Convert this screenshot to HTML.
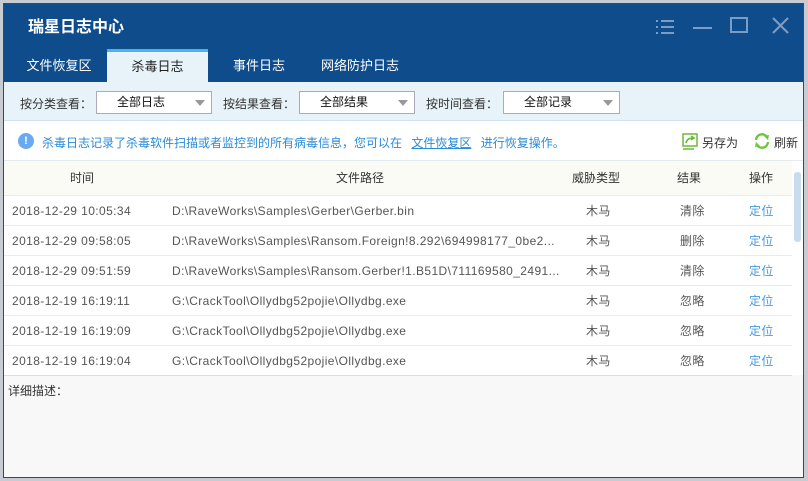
<!DOCTYPE html>
<html><head><meta charset="utf-8"><style>
*{margin:0;padding:0;box-sizing:border-box}
body{width:808px;height:481px;background:#c8ccd2;font-family:"Liberation Sans","Noto Sans CJK SC",sans-serif;font-size:12px;position:relative;overflow:hidden}
.win{position:absolute;left:3px;top:3px;width:801px;height:475px;background:#f8f8f8;border:1px solid #1a4f8c}
.title{position:absolute;left:0;top:0;width:799px;height:78px;background:#0f4c8c}
.title h1{position:absolute;left:24px;top:9px;color:#fff;font-size:16px;font-weight:bold}
.tab{position:absolute;top:45px;height:33px;line-height:33px;color:#fff;font-size:13px;text-align:center}
.tab.act{background:#e8f3f9;color:#222;border-top:3px solid #4db2ea;line-height:30px}
.filter{position:absolute;left:0;top:78px;width:799px;height:39px;background:#e8f3f9;border-bottom:1px solid #cde3f0}
.lbl{position:absolute;top:13px;color:#333}
.sel{position:absolute;top:9px;height:23px;border:1px solid #aab;background:#fff;line-height:21px;color:#111}
.sel span{position:absolute;left:20px}
.sel i{position:absolute;right:6px;top:8px;border-left:5px solid transparent;border-right:5px solid transparent;border-top:6px solid #999}
.info{position:absolute;left:0;top:117px;width:799px;height:40px;background:#fff;border-bottom:1px solid #e4eaee}
.table{position:absolute;left:0;top:157px;width:788px;background:#fff}
.hd{height:35px;background:#fbfbf5;border-bottom:1px solid #e6ecf0;position:relative;color:#333}
.row{height:30px;border-bottom:1px solid #ececec;position:relative;color:#555}
.c{position:absolute;top:0;line-height:30px;white-space:nowrap}
.row .c{letter-spacing:0.4px}
.hd .c{line-height:35px}
</style></head><body>
<div class="win">
 <div class="title"><h1>瑞星日志中心</h1>
  <svg style="position:absolute;left:651px;top:14px" width="20" height="18"><g stroke="#7d9cc4" stroke-width="2"><line x1="1" y1="3" x2="3" y2="3"/><line x1="6" y1="3" x2="19" y2="3"/><line x1="1" y1="9" x2="3" y2="9"/><line x1="6" y1="9" x2="19" y2="9"/><line x1="1" y1="15" x2="3" y2="15"/><line x1="6" y1="15" x2="19" y2="15"/></g></svg>
  <div style="position:absolute;left:689px;top:23px;width:19px;height:2px;background:#7d9cc4"></div>
  <div style="position:absolute;left:726px;top:13px;width:18px;height:16px;border:2px solid #7d9cc4"></div>
  <svg style="position:absolute;left:768px;top:13px" width="17" height="17"><g stroke="#7d9cc4" stroke-width="2"><line x1="1" y1="1" x2="16" y2="16"/><line x1="16" y1="1" x2="1" y2="16"/></g></svg>
 </div>
 <div class="tab" style="left:10px;width:90px">文件恢复区</div>
 <div class="tab act" style="left:103px;width:101px">杀毒日志</div>
 <div class="tab" style="left:212px;width:86px">事件日志</div>
 <div class="tab" style="left:306px;width:100px">网络防护日志</div>
 <div class="filter">
  <div class="lbl" style="left:16px">按分类查看：</div>
  <div class="sel" style="left:92px;width:116px"><span>全部日志</span><i></i></div>
  <div class="lbl" style="left:219px">按结果查看：</div>
  <div class="sel" style="left:295px;width:116px"><span>全部结果</span><i></i></div>
  <div class="lbl" style="left:422px">按时间查看：</div>
  <div class="sel" style="left:499px;width:117px"><span>全部记录</span><i></i></div>
 </div>
 <div class="info">
  <div style="position:absolute;left:14px;top:12px;width:16px;height:16px;border-radius:50%;background:#6aaaf0;color:#fff;font-size:11px;font-weight:bold;text-align:center;line-height:16px">!</div>
  <div style="position:absolute;left:38px;top:13px;color:#2a8ad8">杀毒日志记录了杀毒软件扫描或者监控到的所有病毒信息，您可以在 <span style="text-decoration:underline;margin-left:6px">文件恢复区</span> <span style="margin-left:6px">进行恢复操作。</span></div>
  <svg style="position:absolute;left:678px;top:12px" width="16" height="17"><rect x="1" y="1" width="14" height="12" fill="none" stroke="#6cb83a" stroke-width="1.5"/><line x1="1" y1="16" x2="12" y2="16" stroke="#6cb83a" stroke-width="1.5"/><path d="M4 10 Q5 5 11 5 M9 3 L12 5 L9 7" fill="none" stroke="#6cb83a" stroke-width="1.6"/></svg>
  <div style="position:absolute;left:698px;top:13px;color:#333">另存为</div>
  <svg style="position:absolute;left:750px;top:12px" width="16" height="16"><path d="M2 7 A6 6 0 0 1 13 4 M14 9 A6 6 0 0 1 3 12" fill="none" stroke="#6cc43a" stroke-width="2.4"/><path d="M10 3 L15 2 L14 7 Z M6 13 L1 14 L2 9 Z" fill="#6cc43a"/></svg>
  <div style="position:absolute;left:770px;top:13px;color:#333">刷新</div>
 </div>
 <div class="table">
  <div class="hd"><div class="c" style="left:66px">时间</div><div class="c" style="left:332px">文件路径</div><div class="c" style="left:568px">威胁类型</div><div class="c" style="left:673px">结果</div><div class="c" style="left:745px">操作</div></div>
  <div class="row"><div class="c" style="left:8px">2018-12-29 10:05:34</div><div class="c" style="left:168px">D:\RaveWorks\Samples\Gerber\Gerber.bin</div><div class="c" style="left:582px">木马</div><div class="c" style="left:676px">清除</div><div class="c" style="left:745px;color:#4a9ade">定位</div></div>
  <div class="row"><div class="c" style="left:8px">2018-12-29 09:58:05</div><div class="c" style="left:168px">D:\RaveWorks\Samples\Ransom.Foreign!8.292\694998177_0be2...</div><div class="c" style="left:582px">木马</div><div class="c" style="left:676px">删除</div><div class="c" style="left:745px;color:#4a9ade">定位</div></div>
  <div class="row"><div class="c" style="left:8px">2018-12-29 09:51:59</div><div class="c" style="left:168px">D:\RaveWorks\Samples\Ransom.Gerber!1.B51D\711169580_2491...</div><div class="c" style="left:582px">木马</div><div class="c" style="left:676px">清除</div><div class="c" style="left:745px;color:#4a9ade">定位</div></div>
  <div class="row"><div class="c" style="left:8px">2018-12-19 16:19:11</div><div class="c" style="left:168px">G:\CrackTool\Ollydbg52pojie\Ollydbg.exe</div><div class="c" style="left:582px">木马</div><div class="c" style="left:676px">忽略</div><div class="c" style="left:745px;color:#4a9ade">定位</div></div>
  <div class="row"><div class="c" style="left:8px">2018-12-19 16:19:09</div><div class="c" style="left:168px">G:\CrackTool\Ollydbg52pojie\Ollydbg.exe</div><div class="c" style="left:582px">木马</div><div class="c" style="left:676px">忽略</div><div class="c" style="left:745px;color:#4a9ade">定位</div></div>
  <div class="row" style="border-bottom:1px solid #ddd"><div class="c" style="left:8px">2018-12-19 16:19:04</div><div class="c" style="left:168px">G:\CrackTool\Ollydbg52pojie\Ollydbg.exe</div><div class="c" style="left:582px">木马</div><div class="c" style="left:676px">忽略</div><div class="c" style="left:745px;color:#4a9ade">定位</div></div>
 </div>
 <div style="position:absolute;left:788px;top:157px;width:11px;height:214px;background:#fff"></div>
 <div style="position:absolute;left:790px;top:168px;width:7px;height:70px;background:#c8dcf0;border-radius:3px"></div>
 <div style="position:absolute;left:4px;top:378px;color:#333">详细描述：</div>
</div>
</body></html>
